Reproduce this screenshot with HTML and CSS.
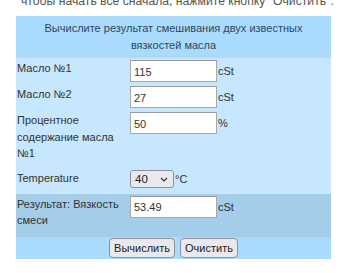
FILE: index.html
```html
<!DOCTYPE html>
<html lang="ru">
<head>
    <meta charset="UTF-8">
    <meta name="viewport" content="width=device-width, initial-scale=1.0">
    <title>Смешивание масел</title>
    <link rel="stylesheet" href="styles.css">
</head>
<body>
    <div class="page">
        <p class="intro">чтобы начать все сначала, нажмите кнопку "Очистить".</p>
        <form class="calc-form" onsubmit="return false;">
            <table class="calc">
                <colgroup>
                    <col class="col-label">
                    <col class="col-input">
                    <col>
                </colgroup>
                <tr class="head">
                    <th colspan="3">Вычислите результат смешивания двух известных вязкостей масла</th>
                </tr>
                <tr>
                    <td class="label">Масло №1</td>
                    <td class="field"><input type="text" id="v1" value="115"></td>
                    <td class="unit">cSt</td>
                </tr>
                <tr>
                    <td class="label">Масло №2</td>
                    <td class="field"><input type="text" id="v2" value="27"></td>
                    <td class="unit">cSt</td>
                </tr>
                <tr>
                    <td class="label">Процентное содержание масла №1</td>
                    <td class="field"><input type="text" id="pct" value="50"></td>
                    <td class="unit">%</td>
                </tr>
                <tr class="temp">
                    <td class="label">Temperature</td>
                    <td class="field" colspan="2">
                        <span class="select-wrap">
                            <select id="temp">
                                <option>40</option>
                                <option>100</option>
                            </select>
                            <svg class="chevron" width="8" height="5" viewBox="0 0 8 5"><path d="M1 1 L4 4 L7 1" fill="none" stroke="#333" stroke-width="1.2"/></svg>
                        </span><span class="unit-inline">°C</span>
                    </td>
                </tr>
                <tr class="result">
                    <td class="label">Результат: Вязкость смеси</td>
                    <td class="field"><input type="text" id="res" value="53.49"></td>
                    <td class="unit">cSt</td>
                </tr>
                <tr class="actions">
                    <td colspan="3">
                        <button type="button" id="calc">Вычислить</button>
                        <button type="button" id="clear">Очистить</button>
                    </td>
                </tr>
            </table>
        </form>
    </div>
</body>
</html>
```

FILE: styles.css
```css
body {
    margin: 0;
    font-family: "Liberation Sans", Arial, sans-serif;
    font-size: 11px;
    color: #333;
    background: #fff;
}
.page {
    padding: 0 19px 0 16px;
}
.intro {
    margin: -8px 0 6px 5px;
    font-size: 12.2px;
    line-height: 18px;
    color: #555;
    white-space: nowrap;
}
.calc-form {
    margin: 0;
}
.calc {
    width: 315px;
    border-collapse: collapse;
    table-layout: fixed;
    background: #c6e7fd;
}
.col-label {
    width: 114px;
}
.col-input {
    width: 87px;
}
.head th {
    background: #aadbfd;
    color: #2f4862;
    font-weight: normal;
    line-height: 17px;
    padding: 4px 12px 4px;
    text-align: center;
}
.calc td {
    vertical-align: top;
    padding: 2px 1px;
    line-height: 16.5px;
}
.calc td.label {
    padding-top: 2px;
}
.calc td.field {
    padding-left: 0;
    padding-right: 0;
}
.calc td.unit {
    padding-left: 1px;
    padding-top: 5px;
}
.field input {
    box-sizing: border-box;
    display: block;
    width: 87px;
    height: 22px;
    margin: 0;
    padding: 1px 3px 0;
    border: 1px solid #a9a9a9;
    border-top-color: #9a9a9a;
    background: #fff;
    font-family: inherit;
    font-size: 11px;
    color: #333;
}
.temp td,
.calc .temp td.label {
    padding-top: 6px;
    padding-bottom: 6px;
}
.temp td.field {
    line-height: 18px;
}
.select-wrap {
    position: relative;
    display: inline-block;
    vertical-align: top;
}
.select-wrap select {
    appearance: none;
    -webkit-appearance: none;
    box-sizing: border-box;
    display: block;
    width: 44px;
    height: 18px;
    margin: 0;
    padding: 0 0 0 4px;
    border: 1px solid #8f8f9d;
    border-radius: 3px;
    background: #e9e9ed;
    font-family: inherit;
    font-size: 11.5px;
    color: #222;
}
.chevron {
    position: absolute;
    right: 6px;
    top: 7px;
}
.unit-inline {
    padding-left: 1px;
}
.result td {
    background: #a4cde9;
    padding-bottom: 9px;
}
.calc .result td.label {
    line-height: 16px;
    padding-top: 2px;
}
.actions td {
    background: #aadbfd;
    text-align: center;
    padding: 1px 0;
    line-height: 20px;
}
.actions button {
    box-sizing: border-box;
    height: 20px;
    margin: 0 1px;
    padding: 0 4px;
    border: 1px solid #8f8f9d;
    border-radius: 4px;
    background: #e9e9ed;
    font-family: inherit;
    font-size: 11px;
    color: #222;
    vertical-align: top;
    cursor: pointer;
}
.actions button:hover {
    background: #d0d0d7;
}
```
